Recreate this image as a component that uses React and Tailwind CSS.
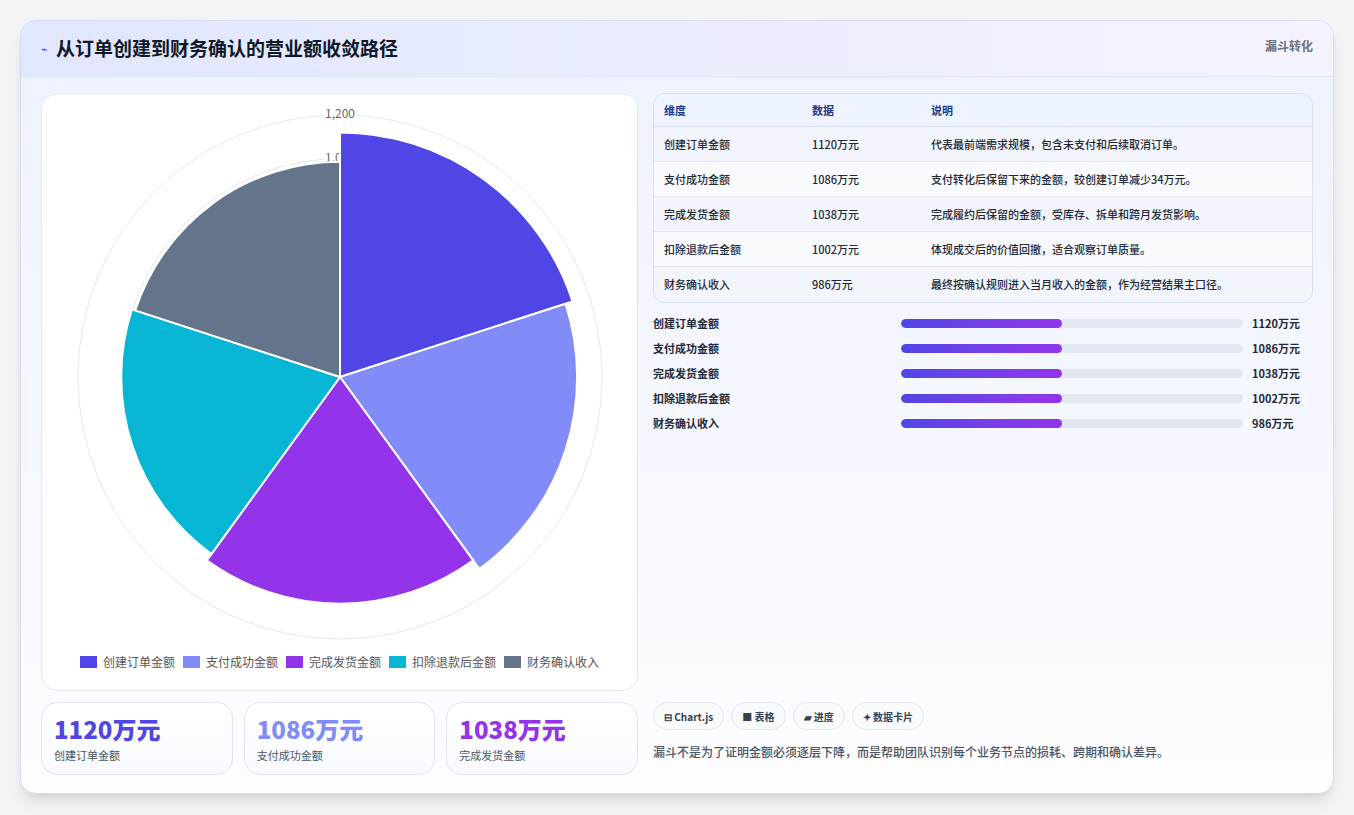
import React from 'react';

const rows = [
  { name: '创建订单金额', v: 1120, color: '#4f46e5', desc: '代表最前端需求规模，包含未支付和后续取消订单。' },
  { name: '支付成功金额', v: 1086, color: '#818cf8', desc: '支付转化后保留下来的金额，较创建订单减少34万元。' },
  { name: '完成发货金额', v: 1038, color: '#9333ea', desc: '完成履约后保留的金额，受库存、拆单和跨月发货影响。' },
  { name: '扣除退款后金额', v: 1002, color: '#06b6d4', desc: '体现成交后的价值回撤，适合观察订单质量。' },
  { name: '财务确认收入', v: 986, color: '#64748b', desc: '最终按确认规则进入当月收入的金额，作为经营结果主口径。' },
];

const font = { fontFamily: '"Noto Sans CJK SC", "Noto Sans", sans-serif' };

function PolarChart() {
  const cx = 298, cy = 283, R = 262;
  const pt = (r, a) => [cx + r * Math.cos(a), cy + r * Math.sin(a)];
  return (
    <svg width="597" height="550" className="block">
      <circle cx={cx} cy={cy} r={R} fill="none" stroke="#e5e7eb" />
      <circle cx={cx} cy={cy} r={R * 1000 / 1200} fill="none" stroke="#e5e7eb" />
      <rect x={cx - 16} y={cy - R - 8} width="32" height="14" fill="white" />
      <text x={cx} y={cy - R + 3} textAnchor="middle" fontSize="12" fill="#666" style={font}>1,200</text>
      <rect x={cx - 16} y={cy - R * 1000 / 1200 - 8} width="32" height="14" fill="white" />
      <text x={cx} y={cy - R * 1000 / 1200 + 3} textAnchor="middle" fontSize="12" fill="#666" style={font}>1,000</text>
      {rows.map((d, i) => {
        const a0 = -Math.PI / 2 + (i * 2 * Math.PI) / 5;
        const a1 = a0 + (2 * Math.PI) / 5;
        const r = (d.v / 1200) * R;
        const [x0, y0] = pt(r, a0);
        const [x1, y1] = pt(r, a1);
        return (
          <path key={i} d={`M${cx},${cy} L${x0},${y0} A${r},${r} 0 0 1 ${x1},${y1} Z`} fill={d.color} stroke="white" strokeWidth="2" />
        );
      })}
    </svg>
  );
}

export default function App() {
  return (
    <div className="min-h-screen bg-[#f3f4f6] pt-5 pl-5 pr-5" style={font}>
      <div className="w-[1314px] h-[774px] bg-gradient-to-b from-[#eef2ff] to-[#fdfdff] rounded-2xl border border-[#d9ddf3] shadow-lg overflow-hidden flex flex-col">
        <div className="h-[56px] shrink-0 bg-gradient-to-r from-[#e0e7ff] to-[#f5f3ff] border-b border-[#dfe4f5] flex items-center justify-between px-5">
          <div className="flex items-center gap-2">
            <span className="text-[#4f46e5] text-[11px]">⌁</span>
            <h1 className="text-[19px] font-bold text-[#111827]">从订单创建到财务确认的营业额收敛路径</h1>
          </div>
          <span className="text-[12px] font-bold text-[#6b7280] self-start mt-4">漏斗转化</span>
        </div>
        <div className="flex gap-[15px] px-5 pt-4">
          <div className="w-[597px] shrink-0 flex flex-col">
            <div className="h-[598px] bg-white rounded-2xl border border-[#e5e7f0] flex flex-col">
              <PolarChart />
              <div className="flex justify-center gap-2 text-[12px] text-[#555] mt-[9px]">
                {rows.map((d) => (
                  <div key={d.name} className="flex items-center gap-[6px]">
                    <span className="w-[17px] h-[12px]" style={{ background: d.color }} />
                    {d.name}
                  </div>
                ))}
              </div>
            </div>
            <div className="flex gap-[11px] mt-[11px]">
              {rows.slice(0, 3).map((d) => (
                <div key={d.name} className="w-[192px] h-[73px] rounded-2xl border border-[#dde5f5] bg-gradient-to-b from-white to-[#f8faff] px-3 pt-3">
                  <div className="text-[24px] font-extrabold leading-7" style={{ color: d.color }}>{d.v}万元</div>
                  <div className="text-[11px] text-[#4b5563] mt-1">{d.name}</div>
                </div>
              ))}
            </div>
          </div>
          <div className="flex-1 flex flex-col">
            <div className="rounded-xl border border-[#d6def0] overflow-hidden text-[11px]">
              <div className="flex h-[33px] items-center bg-[#eef4ff] border-b border-[#d6def0] text-[#1e3a8a] font-bold">
                <span className="w-[158px] pl-[10px]">维度</span>
                <span className="w-[119px]">数据</span>
                <span>说明</span>
              </div>
              {rows.map((d, i) => (
                <div key={d.name} className={`flex h-[35px] items-center text-[#1f2937] font-medium ${i < 4 ? 'border-b border-[#e2e8f0]' : ''} ${i % 2 === 0 ? 'bg-[#f3f5fd]' : 'bg-[#f9fafe]'}`}>
                  <span className="w-[158px] pl-[10px]">{d.name}</span>
                  <span className="w-[119px]">{d.v}万元</span>
                  <span>{d.desc}</span>
                </div>
              ))}
            </div>
            <div className="flex flex-col gap-[9px] mt-3 text-[11px] font-bold text-[#1f2937]">
              {rows.map((d) => (
                <div key={d.name} className="flex items-center h-4">
                  <span className="w-[248px]">{d.name}</span>
                  <div className="w-[342px] h-[9px] rounded-full bg-[#e2e8f0] overflow-hidden">
                    <div className="h-full w-[161px] rounded-full bg-gradient-to-r from-[#4f46e5] to-[#9333ea]" />
                  </div>
                  <span className="ml-[9px]">{d.v}万元</span>
                </div>
              ))}
            </div>
            <div className="flex-1" />
            <div className="flex gap-[7px] text-[10px] font-bold text-[#374151]">
              <span className="h-[28px] px-[10px] rounded-full border border-[#e2e8f0] bg-[#f8fafc] flex items-center">⊟ Chart.js</span>
              <span className="h-[28px] px-[10px] rounded-full border border-[#e2e8f0] bg-[#f8fafc] flex items-center">■ 表格</span>
              <span className="h-[28px] px-[10px] rounded-full border border-[#e2e8f0] bg-[#f8fafc] flex items-center">▰ 进度</span>
              <span className="h-[28px] px-[10px] rounded-full border border-[#e2e8f0] bg-[#f8fafc] flex items-center">✦ 数据卡片</span>
            </div>
            <p className="text-[12px] text-[#4b5563] font-medium mt-[13px] mb-[14px]">漏斗不是为了证明金额必须逐层下降，而是帮助团队识别每个业务节点的损耗、跨期和确认差异。</p>
          </div>
        </div>
      </div>
    </div>
  );
}
